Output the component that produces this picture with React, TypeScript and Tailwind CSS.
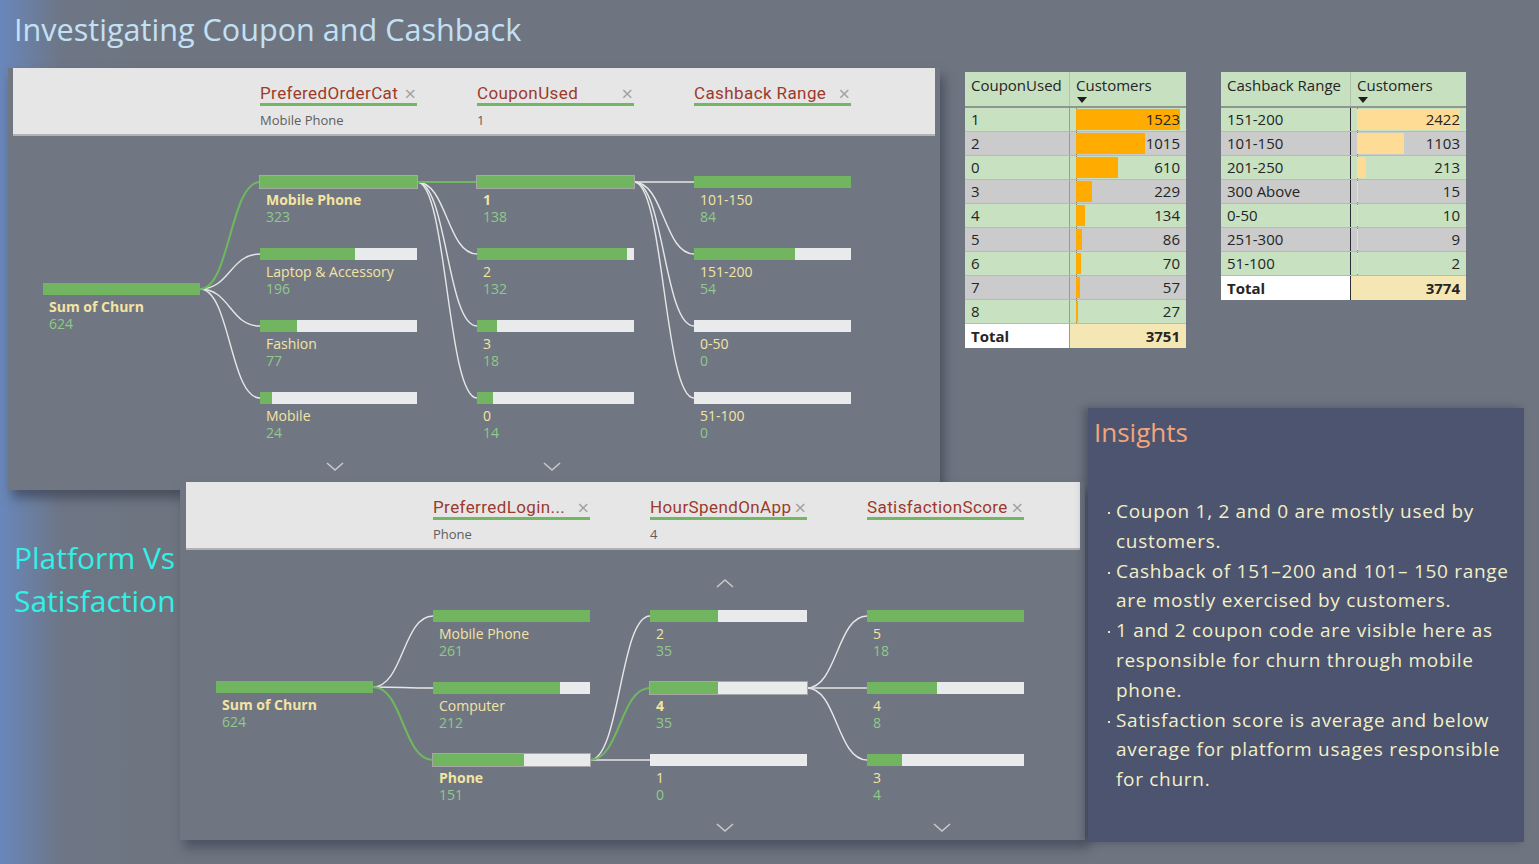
import React from 'react'

type TNode = { label: string; value: string; pct: number; selected?: boolean; bold?: boolean }
type TCol = { top: number; pt: string; nodes: TNode[] }
type TLink = { c: number; from: number; to: number; green?: boolean }

const SANS = "font-['Open_Sans','Noto_Sans',sans-serif]"

const colX = (i: number) => 30 + i * 217
const barY = (col: TCol, i: number) => col.top + i * 72 + 6

function Chevron({ up }: { up?: boolean }) {
  return (
    <svg width="18" height="10" viewBox="0 0 18 10">
      <path d={up ? 'M1 9 L9 2 L17 9' : 'M1 1 L9 8 L17 1'} fill="none" stroke="#c9c9c9" strokeWidth="1.6" />
    </svg>
  )
}

function FilterHeader({ items }: { items: { title: string; value: string }[] }) {
  return (
    <div className="h-[68px] bg-[#e6e6e6] border-b-2 border-[#b2b2b2] flex gap-[60px] pl-[247px] pt-[14px]">
      {items.map((it) => (
        <div key={it.title} className="w-[157px]">
          <div className="flex items-end justify-between h-[24px] border-b-[3px] border-[#72b862]">
            <span className="font-['Roboto',sans-serif] text-[17px] leading-[20px] tracking-[0.4px] text-[#9c3a2c] whitespace-nowrap">{it.title}</span>
            <span className="text-[#a0a0a0] text-[20px] leading-[18px] pr-[1px]">×</span>
          </div>
          <div className="mt-[6px] text-[13px] leading-[16px] text-[#5e5e5e]">{it.value}</div>
        </div>
      ))}
    </div>
  )
}

function Tree({ cols, links, height, chevrons }: { cols: TCol[]; links: TLink[]; height: string; chevrons: { c: number; y: string; up?: boolean }[] }) {
  const ordered = [...links].sort((a, b) => Number(!!a.green) - Number(!!b.green))
  return (
    <div className={`relative ${height}`}>
      <svg className="absolute inset-0 pointer-events-none" width="100%" height="100%">
        {ordered.map((l, k) => {
          const x1 = colX(l.c) + 157
          const y1 = barY(cols[l.c], l.from)
          const x2 = colX(l.c + 1)
          const y2 = barY(cols[l.c + 1], l.to)
          const xm = (x1 + x2) / 2
          return (
            <path
              key={k}
              d={`M${x1} ${y1} C${xm} ${y1} ${xm} ${y2} ${x2} ${y2}`}
              fill="none"
              stroke={l.green ? '#6fb85e' : '#e6e6e6'}
              strokeWidth={l.green ? 2 : 1.4}
            />
          )
        })}
      </svg>
      <div className="relative flex gap-[60px] pl-[30px]">
        {cols.map((col, ci) => (
          <div key={ci} className={`w-[157px] flex flex-col ${col.pt}`}>
            {col.nodes.map((n) => (
              <div key={n.label} className="h-[72px]">
                <div className={`h-[12px] bg-[#e9eaec] flex ${n.selected ? 'outline outline-1 outline-[#a7a7a7]' : ''}`}>
                  <div className="h-full bg-[#71b561]" style={{ width: `${n.pct}%` }} />
                </div>
                <div className={`mt-[4px] pl-[6px] text-[14px] leading-[16px] text-[#f4e4a2] whitespace-nowrap ${n.bold ? 'font-bold text-[13.5px]' : ''}`}>{n.label}</div>
                <div className="pl-[6px] text-[14px] leading-[17px] text-[#8fca88]">{n.value}</div>
              </div>
            ))}
          </div>
        ))}
      </div>
      {chevrons.map((c, k) => (
        <div key={k} className={`absolute ${c.y}`} style={{ left: colX(c.c) + 66 }}>
          <Chevron up={c.up} />
        </div>
      ))}
    </div>
  )
}

function DataTable({ h1, rows, total, w1, barMax, barColor, divider }: { h1: string; rows: [string, number][]; total: string; w1: string; barMax: number; barColor: string; divider: string }) {
  const max = Math.max(...rows.map((r) => r[1]))
  return (
    <div className={`${SANS} text-[15px] text-[#252525]`}>
      <div className="flex h-[36px] bg-[#c6e0c0] border-b-2 border-[#8f988e]">
        <div className={`${w1} pl-[6px] pt-[3px] leading-[20px] whitespace-nowrap`}>{h1}</div>
        <div className="flex-1 pl-[6px] pt-[3px] leading-[20px] border-l border-[#b0c2ac]">
          <div>Customers</div>
          <svg width="10" height="6" viewBox="0 0 10 6" className="ml-[1px] mt-[2px]">
            <path d="M0 0 L10 0 L5 6 Z" fill="#1e1e1e" />
          </svg>
        </div>
      </div>
      {rows.map(([k, v], i) => (
        <div key={k} className={`flex h-[24px] border-b border-[#b5bdb3] ${i % 2 ? 'bg-[#cbcbcb]' : 'bg-[#c7e1c1]'}`}>
          <div className={`${w1} pl-[6px] leading-[23px]`}>{k}</div>
          <div className={`flex-1 relative border-l ${divider}`}>
            <div className="absolute left-[6px] top-0 bottom-0 border-l border-dotted border-[#8a8a6a]" />
            <div className={`absolute left-[6px] top-[1px] bottom-[1px] ${barColor}`} style={{ width: (v / max) * barMax }} />
            <div className="relative text-right pr-[6px] leading-[23px]">{v}</div>
          </div>
        </div>
      ))}
      <div className="flex h-[24px] font-bold">
        <div className={`${w1} pl-[6px] leading-[24px] bg-white`}>Total</div>
        <div className={`flex-1 text-right pr-[6px] leading-[24px] bg-[#f5e7b4] border-l ${divider}`}>{total}</div>
      </div>
    </div>
  )
}

const topCols: TCol[] = [
  { top: 147, pt: 'pt-[147px]', nodes: [{ label: 'Sum of Churn', value: '624', pct: 100, bold: true }] },
  {
    top: 40,
    pt: 'pt-[40px]',
    nodes: [
      { label: 'Mobile Phone', value: '323', pct: 100, selected: true, bold: true },
      { label: 'Laptop & Accessory', value: '196', pct: 60.7 },
      { label: 'Fashion', value: '77', pct: 23.8 },
      { label: 'Mobile', value: '24', pct: 7.4 },
    ],
  },
  {
    top: 40,
    pt: 'pt-[40px]',
    nodes: [
      { label: '1', value: '138', pct: 100, selected: true, bold: true },
      { label: '2', value: '132', pct: 95.7 },
      { label: '3', value: '18', pct: 13 },
      { label: '0', value: '14', pct: 10.1 },
    ],
  },
  {
    top: 40,
    pt: 'pt-[40px]',
    nodes: [
      { label: '101-150', value: '84', pct: 100 },
      { label: '151-200', value: '54', pct: 64.3 },
      { label: '0-50', value: '0', pct: 0 },
      { label: '51-100', value: '0', pct: 0 },
    ],
  },
]

const topLinks: TLink[] = [
  { c: 0, from: 0, to: 0, green: true },
  { c: 0, from: 0, to: 1 },
  { c: 0, from: 0, to: 2 },
  { c: 0, from: 0, to: 3 },
  { c: 1, from: 0, to: 0, green: true },
  { c: 1, from: 0, to: 1 },
  { c: 1, from: 0, to: 2 },
  { c: 1, from: 0, to: 3 },
  { c: 2, from: 0, to: 0 },
  { c: 2, from: 0, to: 1 },
  { c: 2, from: 0, to: 2 },
  { c: 2, from: 0, to: 3 },
]

const bottomCols: TCol[] = [
  { top: 131, pt: 'pt-[131px]', nodes: [{ label: 'Sum of Churn', value: '624', pct: 100, bold: true }] },
  {
    top: 60,
    pt: 'pt-[60px]',
    nodes: [
      { label: 'Mobile Phone', value: '261', pct: 100 },
      { label: 'Computer', value: '212', pct: 81.2 },
      { label: 'Phone', value: '151', pct: 57.9, selected: true, bold: true },
    ],
  },
  {
    top: 60,
    pt: 'pt-[60px]',
    nodes: [
      { label: '2', value: '35', pct: 43.3 },
      { label: '4', value: '35', pct: 43.3, selected: true, bold: true },
      { label: '1', value: '0', pct: 0 },
    ],
  },
  {
    top: 60,
    pt: 'pt-[60px]',
    nodes: [
      { label: '5', value: '18', pct: 100 },
      { label: '4', value: '8', pct: 44.4 },
      { label: '3', value: '4', pct: 22.2 },
    ],
  },
]

const bottomLinks: TLink[] = [
  { c: 0, from: 0, to: 0 },
  { c: 0, from: 0, to: 1 },
  { c: 0, from: 0, to: 2, green: true },
  { c: 1, from: 2, to: 0 },
  { c: 1, from: 2, to: 1, green: true },
  { c: 1, from: 2, to: 2 },
  { c: 2, from: 1, to: 0 },
  { c: 2, from: 1, to: 1 },
  { c: 2, from: 1, to: 2 },
]

const insights: string[][] = [
  ['Coupon 1, 2 and 0 are mostly used by', 'customers.'],
  ['Cashback of 151–200 and 101– 150 range', 'are mostly exercised by customers.'],
  ['1 and 2 coupon code are visible here as', 'responsible for churn through mobile', 'phone.'],
  ['Satisfaction score is average and below', 'average for platform usages responsible', 'for churn.'],
]

export default function App() {
  return (
    <div className={`${SANS} w-[1539px] h-[864px] overflow-hidden bg-[linear-gradient(to_right,#6987bb_0px,#6d7686_60px,#6e7581_140px)]`}>
      <h1 className="h-[68px] pl-[14px] pt-[9px] text-[30.6px] leading-[40px] text-[#c3e0f4]">Investigating Coupon and Cashback</h1>

      <div className="flex items-start">
        <div className="ml-[8px] w-[932px] h-[422px] px-[5px] bg-[#707783] shadow-[4px_8px_10px_rgba(45,50,68,0.55)]">
          <FilterHeader
            items={[
              { title: 'PreferedOrderCat', value: 'Mobile Phone' },
              { title: 'CouponUsed', value: '1' },
              { title: 'Cashback Range', value: '' },
            ]}
          />
          <Tree
            cols={topCols}
            links={topLinks}
            height="h-[352px]"
            chevrons={[
              { c: 1, y: 'top-[326px]' },
              { c: 2, y: 'top-[326px]' },
            ]}
          />
        </div>

        <div className="ml-[25px] mt-[4px] w-[221px]">
          <DataTable
            h1="CouponUsed"
            w1="w-[104px]"
            barMax={104}
            barColor="bg-[#ffab00]"
            divider="border-[#9a9a9a]"
            total="3751"
            rows={[
              ['1', 1523],
              ['2', 1015],
              ['0', 610],
              ['3', 229],
              ['4', 134],
              ['5', 86],
              ['6', 70],
              ['7', 57],
              ['8', 27],
            ]}
          />
        </div>

        <div className="ml-[35px] mt-[4px] w-[245px]">
          <DataTable
            h1="Cashback Range"
            w1="w-[129px]"
            barMax={103}
            barColor="bg-[#ffdc96]"
            divider="border-[#2d2d35]"
            total="3774"
            rows={[
              ['151-200', 2422],
              ['101-150', 1103],
              ['201-250', 213],
              ['300 Above', 15],
              ['0-50', 10],
              ['251-300', 9],
              ['51-100', 2],
            ]}
          />
        </div>
      </div>

      <div className="flex items-start mt-[-82px]">
        <div className="w-[180px] pl-[14px] pt-[128px] text-[30px] leading-[43px] text-[#33f0e6]">
          Platform Vs
          <br />
          Satisfaction
        </div>

        <div className="mt-[74px] w-[905px] h-[358px] pl-[6px] pr-[5px] bg-[#6f7682] shadow-[4px_8px_10px_rgba(45,50,68,0.5)]">
          <FilterHeader
            items={[
              { title: 'PreferredLogin...', value: 'Phone' },
              { title: 'HourSpendOnApp', value: '4' },
              { title: 'SatisfactionScore', value: '' },
            ]}
          />
          <Tree
            cols={bottomCols}
            links={bottomLinks}
            height="h-[288px]"
            chevrons={[
              { c: 2, y: 'top-[28px]', up: true },
              { c: 2, y: 'top-[273px]' },
              { c: 3, y: 'top-[273px]' },
            ]}
          />
        </div>

        <div className="ml-[3px] w-[436px] h-[434px] bg-[#4c5470] shadow-[-4px_0_8px_rgba(40,46,66,0.45)] pl-[6px]">
          <div className="pt-[6px] text-[26px] leading-[36px] text-[#f2a57b]">Insights</div>
          <div className="mt-[47px] text-[19px] leading-[29.8px] tracking-[0.7px] text-[#f3efc6]">
            {insights.map((lines, i) => (
              <div key={i} className="flex">
                <div className="w-[22px] pl-[14px] pt-[15px]">
                  <div className="w-[2px] h-[2px] bg-[#e6e2c0]" />
                </div>
                <div className="whitespace-nowrap">
                  {lines.map((l) => (
                    <div key={l}>{l}</div>
                  ))}
                </div>
              </div>
            ))}
          </div>
        </div>
      </div>
    </div>
  )
}
